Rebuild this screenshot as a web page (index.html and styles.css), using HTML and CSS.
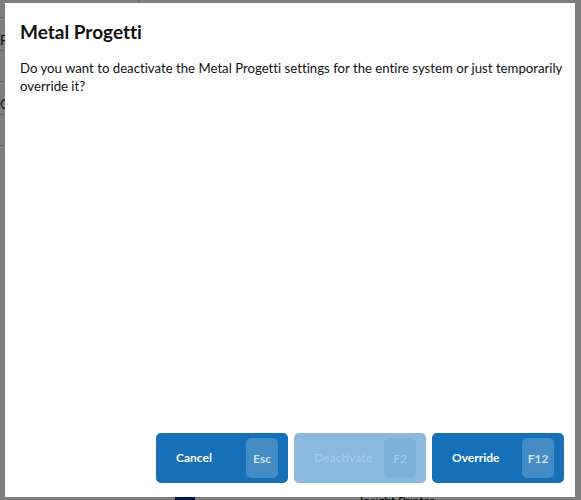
FILE: index.html
```html
<!DOCTYPE html>
<html lang="en">
<head>
<meta charset="utf-8">
<title>Metal Progetti</title>
<link rel="stylesheet" href="styles.css">
</head>
<body>
<div class="page">
  <div class="bg-form">
    <div class="bg-field"></div>
    <div class="bg-label">F</div>
    <div class="bg-field tall"></div>
    <div class="bg-label">C</div>
    <div class="bg-field tall"></div>
  </div>
  <div class="bg-footer">
    <span class="bg-icon"></span>
    <span class="bg-text">Insight Printer</span>
  </div>
</div>
<div class="overlay">
  <div class="dialog" role="dialog" aria-labelledby="dlg-title">
    <h1 class="dialog-title" id="dlg-title">Metal Progetti</h1>
    <p class="dialog-text">Do you want to deactivate the Metal Progetti settings for the entire system or just temporarily override it?</p>
    <div class="dialog-actions">
      <button class="btn"><span class="btn-label">Cancel</span><span class="key">Esc</span></button>
      <button class="btn is-disabled" disabled><span class="btn-label">Deactivate</span><span class="key">F2</span></button>
      <button class="btn"><span class="btn-label">Override</span><span class="key">F12</span></button>
    </div>
  </div>
</div>
</body>
</html>
```

FILE: styles.css
```css
html, body {
  margin: 0;
  padding: 0;
  width: 581px;
  height: 500px;
  overflow: hidden;
  font-family: Lato, "Noto Sans", sans-serif;
  font-variant-ligatures: none;
}

.page {
  width: 581px;
  height: 500px;
  background: #ffffff;
  display: flex;
  flex-direction: column;
  justify-content: space-between;
}

.bg-form {
  margin-left: -60px;
  width: 200px;
  display: flex;
  flex-direction: column;
}

.bg-field {
  height: 18px;
  margin-top: -2px;
  border: 1px solid #c8c8c8;
  border-radius: 6px;
}

.bg-field.tall {
  height: 30px;
}

.bg-label {
  margin: 14px 0 4px 60px;
  font-size: 13px;
  color: #222;
}

.bg-footer {
  display: flex;
  align-items: flex-start;
  height: 4px;
  padding-left: 175px;
  gap: 165px;
  overflow: hidden;
}

.bg-icon {
  display: block;
  width: 20px;
  height: 10px;
  background: #1a2a9a;
}

.bg-text {
  font-size: 12px;
  line-height: 10px;
  color: #000;
}

.overlay {
  position: fixed;
  inset: 0;
  background: rgba(0, 0, 0, 0.5);
  display: flex;
  align-items: flex-start;
  justify-content: flex-start;
  padding: 3px 0 0 5px;
}

.dialog {
  box-sizing: border-box;
  width: 570px;
  height: 494px;
  background: #ffffff;
  padding: 17px 11px 14px 15px;
  display: flex;
  flex-direction: column;
}

.dialog-title {
  margin: 0;
  font-size: 19px;
  font-weight: 700;
  line-height: 24px;
  color: #111;
}

.dialog-text {
  margin: 16px 0 0;
  font-size: 13.2px;
  line-height: 17.5px;
  color: #111;
  flex: 1;
}

.dialog-actions {
  display: flex;
  justify-content: flex-end;
  gap: 6px;
}

.btn {
  box-sizing: border-box;
  width: 132px;
  height: 50px;
  border: none;
  border-radius: 5px;
  background: #1570b8;
  color: #ffffff;
  font-family: inherit;
  font-size: 12px;
  font-weight: 700;
  display: flex;
  align-items: center;
  justify-content: space-between;
  padding: 5px 10px 5px 20px;
  cursor: pointer;
}

.btn-label {
  line-height: 14px;
}

.key {
  width: 32px;
  height: 40px;
  border-radius: 5px;
  background: rgba(255, 255, 255, 0.2);
  color: rgba(255, 255, 255, 0.75);
  display: flex;
  align-items: center;
  justify-content: center;
  font-weight: 700;
}

.btn.is-disabled {
  background: #8bb8dd;
  color: #a4c8e6;
  cursor: default;
}

.btn.is-disabled .key {
  background: rgba(21, 112, 184, 0.12);
  color: #a4c8e6;
}
```
